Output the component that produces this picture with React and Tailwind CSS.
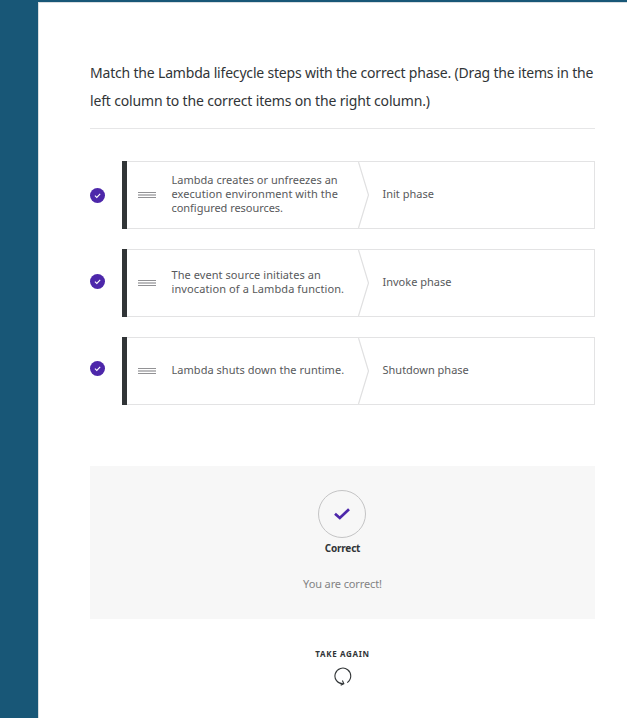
import React from "react";

const ROWS = [
  {
    lines: [
      ["Lambda creates or unfreezes an", "tracking-[0.02px]"],
      ["execution environment with the", "tracking-[0.07px]"],
      ["configured resources.", "tracking-[-0.04px]"],
    ],
    phase: "Init phase",
    badge: "pt-px",
  },
  {
    lines: [
      ["The event source initiates an", "tracking-[0.06px]"],
      ["invocation of a Lambda function.", "tracking-[0.1px]"],
    ],
    phase: "Invoke phase",
    badge: "pb-[3px]",
  },
  {
    lines: [["Lambda shuts down the runtime.", "tracking-[0.04px]"]],
    phase: "Shutdown phase",
    badge: "pb-[5px]",
  },
];

function Badge() {
  return (
    <span className="flex size-[15px] items-center justify-center rounded-full bg-[#4d27aa]">
      <svg width="15" height="15" viewBox="0 0 15 15" fill="none">
        <path d="M4.9 7.7 6.8 9.4 10.2 5.9" stroke="#fff" strokeWidth="1.1" />
      </svg>
    </span>
  );
}

function Handle() {
  return (
    <span className="flex h-[6px] w-[18px] flex-col justify-between">
      <i className="h-px bg-[#929295]" />
      <i className="h-[2px] bg-[#bcbcbe]" />
      <i className="h-px bg-[#929295]" />
    </span>
  );
}

function MatchRow({ lines, phase, badge }) {
  return (
    <li className="flex h-[68px] items-center">
      <div className={"w-8 " + badge}>
        <Badge />
      </div>
      <div className="h-full w-[5px] bg-[#313537]" />
      <div className="flex h-full flex-1 items-center border border-l-0 border-[#e3e3e4] text-[11px] leading-[14px] text-[#58595b]">
        <div className="flex w-[231px] items-center pl-[11px]">
          <Handle />
          <p className="ml-[15.5px] pb-[2px] whitespace-nowrap">
            {lines.map(([line, tracking]) => (
              <span key={line} className={"block " + tracking}>
                {line}
              </span>
            ))}
          </p>
        </div>
        <svg width="12" height="66" viewBox="0 0 12 66" fill="none" className="shrink-0">
          <path d="M0.5 0 10.5 33 0.5 66" stroke="#e0e0e1" strokeWidth="1.2" />
        </svg>
        <p className="ml-[12.5px] pb-[2px] whitespace-nowrap">{phase}</p>
      </div>
    </li>
  );
}

export default function App() {
  return (
    <div className="flex h-[718px] w-full overflow-hidden bg-[#185777] pt-0.5 pl-[38px] font-['Noto_Sans','Open_Sans',sans-serif]">
      <main className="min-w-0 flex-1 border-t border-l border-[#d9dde0] bg-white pr-8 pl-[51px]">
        <h1 className="mt-14 h-[70px] border-b border-[#e6e6e7] text-[14px] leading-7 font-normal whitespace-nowrap text-[#313537]">
          <span className="block tracking-[-0.187px]">
            Match the Lambda lifecycle steps with the correct phase. (Drag the items in the
          </span>
          <span className="block tracking-[-0.16px]">
            left column to the correct items on the right column.)
          </span>
        </h1>

        <ul className="mt-8 flex flex-col gap-5">
          {ROWS.map((row) => (
            <MatchRow key={row.phase} {...row} />
          ))}
        </ul>

        <section className="mt-[61px] flex h-[153px] flex-col items-center bg-[#f7f7f7] pt-6">
          <div className="mr-px flex size-12 items-center justify-center rounded-full border border-[#c4c4c5]">
            <svg width="18" height="14" viewBox="0 0 18 14" fill="none">
              <path d="M2 6.8 6.8 11 16 2.2" stroke="#4d27aa" strokeWidth="2.7" />
            </svg>
          </div>
          <p className="mt-[3px] text-[10px] leading-[14px] font-bold tracking-[-0.2px] text-[#313537]">
            Correct
          </p>
          <p className="mt-[21px] text-[11px] leading-4 tracking-[-0.12px] text-[#838384]">
            You are correct!
          </p>
        </section>

        <button className="mx-auto mt-7 flex flex-col items-center">
          <span className="text-[8px] leading-[14px] font-bold tracking-[0.65px] text-[#313537]">
            TAKE AGAIN
          </span>
          <svg width="18" height="20" viewBox="0 0 18 20" fill="none" className="mt-1.5 ml-px" stroke="#313537">
            <path d="M13.2 15.6A7.9 7.9 0 1 0 9 16.9" strokeWidth="1.1" />
            <path d="M8.4 13.6 9.8 16.7 6.7 18.3" strokeWidth="1.1" />
          </svg>
        </button>
      </main>
    </div>
  );
}
